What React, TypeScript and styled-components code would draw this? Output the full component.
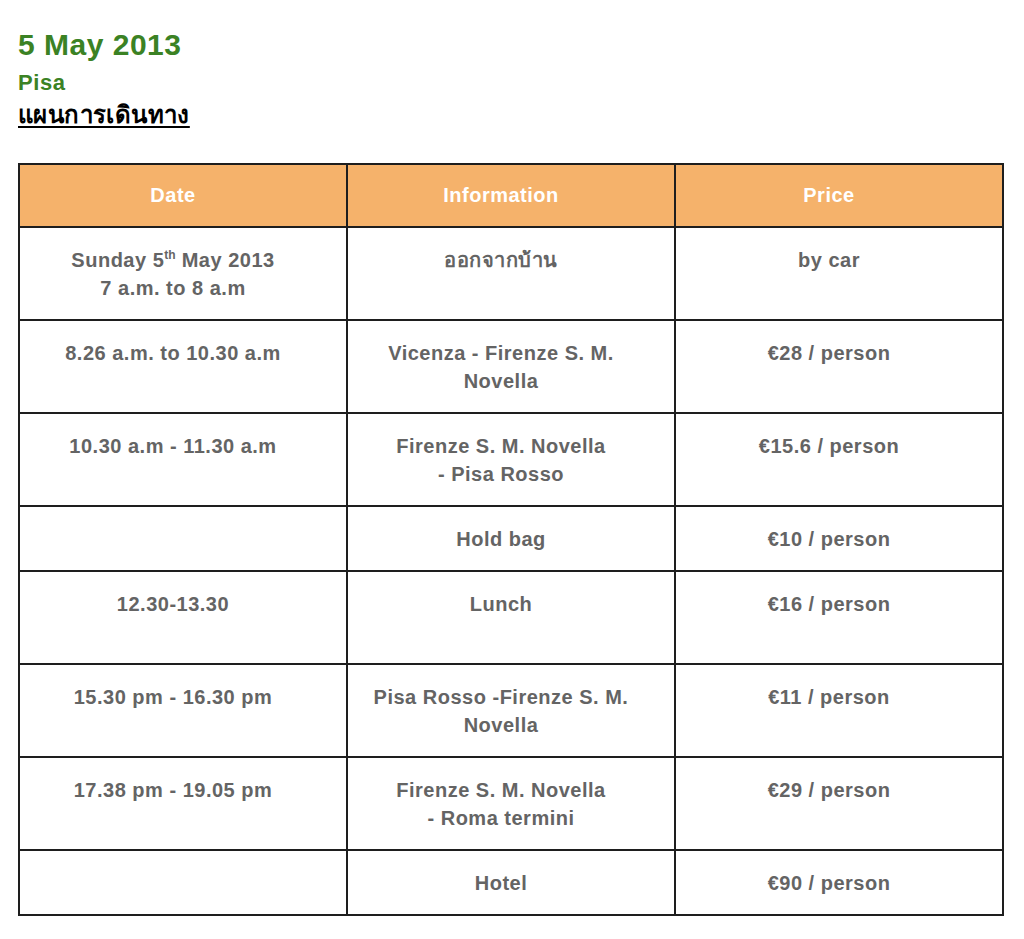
import React from 'react'
import styled, { createGlobalStyle } from 'styled-components'

const GlobalStyle = createGlobalStyle`
  body {
    margin: 0;
    background: #ffffff;
    font-family: 'Liberation Sans', Arial, 'Noto Sans', sans-serif;
  }
`

const Page = styled.div`
  padding: 27px 20px 20px 18px;
`

const Title = styled.h1`
  margin: 0;
  font-size: 30px;
  line-height: 36px;
  font-weight: 700;
  letter-spacing: 0.5px;
  color: #3b8224;
`

const Place = styled.h2`
  margin: 7px 0 0;
  font-size: 22px;
  line-height: 26px;
  font-weight: 700;
  letter-spacing: 0.6px;
  color: #3b8224;
`

const Plan = styled.h3`
  margin: 3px 0 0;
  font-size: 24px;
  line-height: 32px;
  font-weight: 700;
  letter-spacing: 0.4px;
  color: #000;
  text-decoration: underline;
  text-decoration-thickness: 2px;
  text-underline-offset: 3px;
`

const Table = styled.table`
  margin-top: 32px;
  width: 986px;
  border-collapse: collapse;
  table-layout: fixed;
`

const HeadCell = styled.th`
  height: 61px;
  padding: 0 20px 0 0;
  background: #f5b26b;
  border: 2px solid #1e1e1e;
  color: #fff;
  font-size: 20px;
  font-weight: 700;
  letter-spacing: 0.5px;
  text-align: center;
  vertical-align: middle;
`

const Row = styled.tr<{ $tall?: boolean }>`
  height: ${p => (p.$tall ? 93 : 65)}px;
`

const Cell = styled.td`
  padding: 18px 20px 0 0;
  border: 2px solid #1e1e1e;
  color: #646464;
  font-size: 20px;
  line-height: 28px;
  font-weight: 700;
  letter-spacing: 0.5px;
  text-align: center;
  vertical-align: top;
`

const Sup = styled.sup`
  font-size: 12px;
  line-height: 0;
  vertical-align: 8px;
  letter-spacing: 0;
`

type Item = { date: React.ReactNode; info: React.ReactNode; price: string; tall: boolean }

const rows: Item[] = [
  {
    date: (
      <>
        Sunday 5<Sup>th</Sup> May 2013
        <br />7 a.m. to 8 a.m
      </>
    ),
    info: 'ออกจากบ้าน',
    price: 'by car',
    tall: true,
  },
  { date: '8.26 a.m. to 10.30 a.m', info: <>Vicenza - Firenze S. M.<br />Novella</>, price: '€28 / person', tall: true },
  { date: '10.30 a.m - 11.30 a.m', info: <>Firenze S. M. Novella<br />- Pisa Rosso</>, price: '€15.6 / person', tall: true },
  { date: '', info: 'Hold bag', price: '€10 / person', tall: false },
  { date: '12.30-13.30', info: 'Lunch', price: '€16 / person', tall: true },
  { date: '15.30 pm - 16.30 pm', info: <>Pisa Rosso -Firenze S. M.<br />Novella</>, price: '€11 / person', tall: true },
  { date: '17.38 pm - 19.05 pm', info: <>Firenze S. M. Novella<br />- Roma termini</>, price: '€29 / person', tall: true },
  { date: '', info: 'Hotel', price: '€90 / person', tall: false },
]

export default function App() {
  return (
    <>
      <GlobalStyle />
      <Page>
        <Title>5 May 2013</Title>
        <Place>Pisa</Place>
        <Plan>แผนการเดินทาง</Plan>
        <Table>
          <thead>
            <tr>
              <HeadCell>Date</HeadCell>
              <HeadCell>Information</HeadCell>
              <HeadCell>Price</HeadCell>
            </tr>
          </thead>
          <tbody>
            {rows.map((r, i) => (
              <Row key={i} $tall={r.tall}>
                <Cell>{r.date}</Cell>
                <Cell>{r.info}</Cell>
                <Cell>{r.price}</Cell>
              </Row>
            ))}
          </tbody>
        </Table>
      </Page>
    </>
  )
}
